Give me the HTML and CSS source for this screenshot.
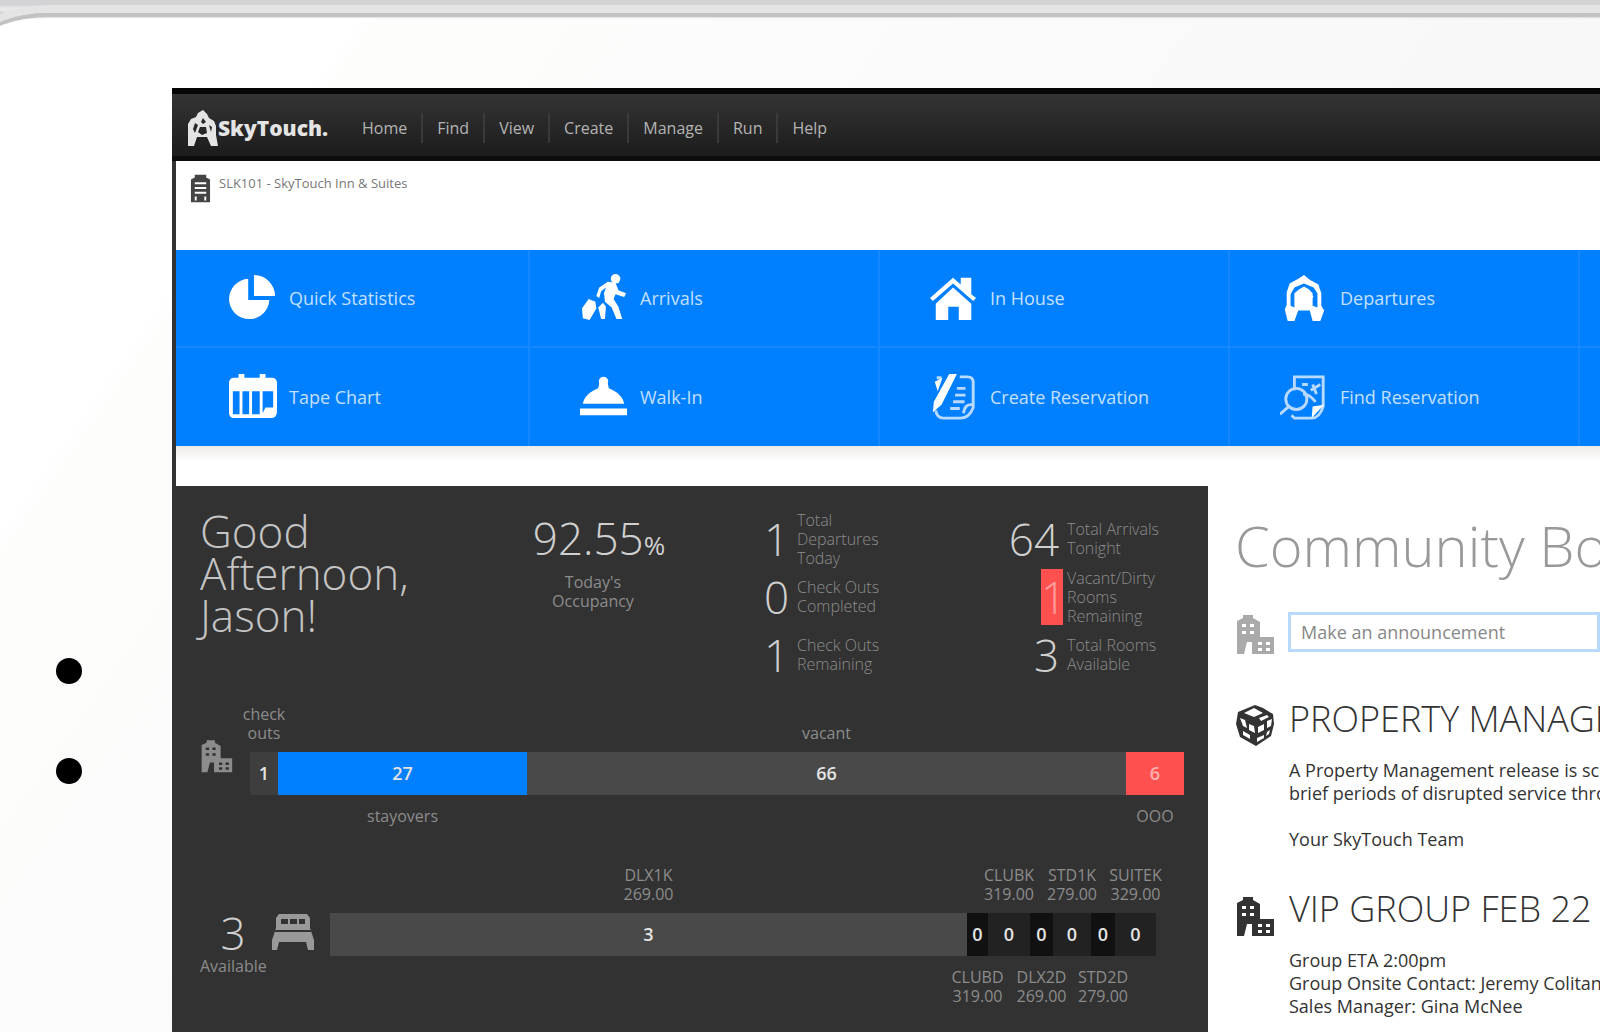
FILE: index.html
```html
<!DOCTYPE html>
<html lang="en">
<head>
<meta charset="utf-8">
<title>SkyTouch</title>
<link rel="stylesheet" href="styles.css">
</head>
<body>
<svg class="defs" aria-hidden="true">
  <symbol id="hotel" viewBox="0 0 40 42">
    <path fill-rule="evenodd" d="M2 42V9L8 6V3h10v3l7 4v15h14v17H17V30h-5l-3 12zM7 12v3h4v-3zm8 0v3h4v-3zm-8 7v3h4v-3zm8 0v3h4v-3zm8 11v3h4v-3zm8 0v3h4v-3zm-8 6v3h4v-3zm8 0v3h4v-3z"/>
  </symbol>
</svg>
<div class="device">
  <div class="bezel"></div>
  <div class="stage">
    <ul class="bullets"><li></li><li></li></ul>
    <div class="screen">
      <header class="topbar">
        <a class="logo" href="#">
          <svg class="logo-mark" viewBox="0 0 30 36" aria-hidden="true"><path fill-rule="evenodd" d="M0 36V14L3 9l5-2 2-4 5-3 4 4 2 4 5 3 2 5v9l2 11h-7l-4-9H9L6 36zM7 13l-2 6 2 4 3-8zm8-5-2 4 2 2 3-2zm6 7 2 7 1-5zm-9 2-2 5 4 3 5-2-1-6z"/></svg>
          <span>SkyTouch.</span>
        </a>
        <nav class="menu">
          <a href="#">Home</a><a href="#">Find</a><a href="#">View</a><a href="#">Create</a><a href="#">Manage</a><a href="#">Run</a><a href="#">Help</a>
        </nav>
      </header>
      <div class="property">
        <svg class="property-icon" viewBox="0 0 22 30" aria-hidden="true"><path fill-rule="evenodd" d="M1 30V6l4-2V1h12v3l4 2v24zM5 9v2h12V9zm0 5v2h12v-2zm0 5v2h12v-2zM5 28h2v-4H5zm10 0h2v-4h-2z"/></svg>
        <span>SLK101 - SkyTouch Inn &amp; Suites</span>
      </div>
      <nav class="tiles">
        <a href="#"><svg viewBox="0 0 50 50"><path d="M20 5v22h22A21 21 0 1 1 20 5z"/><path d="M26 1a22 22 0 0 1 22 22H26z"/></svg>Quick Statistics</a>
        <a href="#"><svg viewBox="0 0 50 50"><circle cx="37" cy="5" r="5"/><path d="M20 14l9-6 8 1 3 8 8 3-2 4-9-3-2 5 5 8 4 13h-6l-5-12-7-6-1-9 2-6-5 4-2 7-3-2zM2 36l7-10 7 3 1 7-7 12-7-2zM19 35l5-5 3 4-1 13h-4z"/></svg>Arrivals</a>
        <a href="#"><svg viewBox="0 0 50 50"><path d="M24 14L43 31v17H30V34H19v14H6V31z"/><path d="M24 4L0 25l3 3 21-18 21 18 3-3-5-4V4H32v7z"/></svg>In House</a>
        <a href="#"><svg viewBox="0 0 50 50"><path fill-rule="evenodd" d="M25 1l6 5 9 5 3 9v13l3 5-4 11h-8l-3-11H19l-4 11H8L5 37l2-5V19l3-9 9-5zm0 9l-10 4-4 7v12l4 2V20l5-4 5-3 5 3 4 4v13l5 2V20l-4-6z"/><path d="M25 17l4 5 6 1-3 5 1 6H17l1-6-3-5 6-1z"/></svg>Departures</a>
        <a href="#"></a>
        <a href="#"><svg viewBox="0 0 50 50"><path fill-rule="evenodd" d="M5 5h5V1h6v4h16V1h6v4h7a5 5 0 0 1 5 5v31a6 6 0 0 1-6 6H5a5 5 0 0 1-5-5V10a5 5 0 0 1 5-5zm-1 14v24h7V19zm10 0v24h7V19zm10 0v24h8V19zm11 0v23l3-6h8V19z"/></svg>Tape Chart</a>
        <a href="#"><svg viewBox="0 0 50 50"><path d="M20 11a5 5 0 1 1 9 0l1 5c8 3 15 9 16 16H3c1-7 8-13 16-16zM0 37h49v7H0z"/></svg>Walk-In</a>
        <a href="#"><svg class="outline" viewBox="0 0 50 50"><path d="M31 4h8q6 0 6 6v26q-4 11-13 11H14q-7 0-8-8M7 5h5M28 16h9M26 23h11M24 30h12M21 37h10M44 33q-8-1-9 9"/><path class="solid" d="M20 1h8L12 33 3 41l1-11zM5 9l8-4-5 14z"/></svg>Create Reservation</a>
        <a href="#"><svg class="outline" viewBox="0 0 50 50"><path d="M15 18V4h30v31q-4 12-12 12H15l-3-3M23 12h6M32 18l10-6M34 12l4 10"/><circle cx="17" cy="27" r="11"/><path d="M9 35l-9 8M24 22c6 0 10 4 13 8"/><path class="solid" d="M46 33L33 47l1-12z"/></svg>Find Reservation</a>
        <a href="#"></a>
      </nav>
      <main class="content">
        <section class="dashboard">
          <div class="summary">
            <h1>Good Afternoon, Jason!</h1>
            <div class="occupancy"><strong>92.55<small>%</small></strong><span>Today's<br>Occupancy</span></div>
            <dl class="stats">
              <dd>1</dd><dt>Total<br>Departures<br>Today</dt>
              <dd>0</dd><dt>Check Outs<br>Completed</dt>
              <dd>1</dd><dt>Check Outs<br>Remaining</dt>
            </dl>
            <dl class="stats">
              <dd>64</dd><dt>Total Arrivals<br>Tonight</dt>
              <dd><mark>1</mark></dd><dt>Vacant/Dirty<br>Rooms<br>Remaining</dt>
              <dd>3</dd><dt>Total Rooms<br>Available</dt>
            </dl>
          </div>
          <div class="chart-row">
            <div class="chart-key"><svg class="hotel" aria-hidden="true"><use href="#hotel"/></svg></div>
            <div class="chart rooms">
              <span class="above">check<br>outs</span><span class="above">&nbsp;</span><span class="above">vacant</span><span class="above">&nbsp;</span>
              <b class="dim">1</b><b class="blue">27</b><b class="grey">66</b><b class="red">6</b>
              <span></span><span>stayovers</span><span></span><span>OOO</span>
            </div>
          </div>
          <div class="chart-row types-row">
            <div class="chart-key available">
              <div class="count"><strong>3</strong><span>Available</span></div>
              <svg class="bed" viewBox="0 0 42 36" aria-hidden="true"><path fill-rule="evenodd" d="M4 14V4l3-4h28l3 4v10l4 12v10h-6l-2-8H7l-2 8H0V26zM9 5v5h7V5zm9 0v5h7V5zm9 0v5h6V5zM3 16v2h36v-2z"/></svg>
            </div>
            <div class="chart types">
              <span class="above">DLX1K<br>269.00</span><span class="above"></span><span class="above">CLUBK<br>319.00</span><span class="above"></span><span class="above">STD1K<br>279.00</span><span class="above"></span><span class="above">SUITEK<br>329.00</span>
              <b class="grey">3</b><b class="black">0</b><b class="dark">0</b><b class="black">0</b><b class="dark">0</b><b class="black">0</b><b class="dark">0</b>
              <span></span><span>CLUBD<br>319.00</span><span></span><span>DLX2D<br>269.00</span><span></span><span>STD2D<br>279.00</span><span></span>
            </div>
          </div>
        </section>
        <section class="community">
          <h2>Community Board</h2>
          <div class="entry announce">
            <svg class="entry-icon" aria-hidden="true"><use href="#hotel"/></svg>
            <input type="text" placeholder="Make an announcement" aria-label="Make an announcement">
          </div>
          <article class="entry">
            <svg class="entry-icon" viewBox="0 0 40 42" aria-hidden="true"><path fill-rule="evenodd" d="M20 1l8 3 10 6 1 10-3 12-15 10-16-9L1 20l2-12zM9 9l10-5 9 5-9 4zm-4 5l3 8 4 2-2-8zm9 6l5 2 1 7-6-3zm9 3l6-3v6l-6 3zm9-6l5-2-1 7-4 2zM8 27l7 4v4l-7-4zm14 7l7-3v3l-7 4zm10-6l3-2-1 4-3 2zM24 14l8-3 2 2-8 4z"/></svg>
            <div>
              <h3>PROPERTY MANAGEMENT</h3>
              <p>A Property Management release is scheduled with<br>brief periods of disrupted service throughout<br><br>Your SkyTouch Team</p>
            </div>
          </article>
          <article class="entry">
            <svg class="entry-icon" aria-hidden="true"><use href="#hotel"/></svg>
            <div>
              <h3>VIP GROUP FEB 22</h3>
              <p>Group ETA 2:00pm<br>Group Onsite Contact: Jeremy Colitan<br>Sales Manager: Gina McNee</p>
            </div>
          </article>
        </section>
      </main>
    </div>
  </div>
</div>
</body>
</html>
```
FILE: styles.css
```css
* { box-sizing: border-box; }

body {
  margin: 0;
  background: #d3d3d5;
  font-family: "Open Sans", "Noto Sans", sans-serif;
  overflow: hidden;
}

h1, h2, h3, p, dl, dd, ul { margin: 0; padding: 0; font-weight: 300; }
a { color: inherit; text-decoration: none; }
svg { display: block; flex: none; fill: currentColor; }
.defs { width: 0; height: 0; position: absolute; }

.device {
  min-height: 100vh;
  background: linear-gradient(125deg, #fff 0, #fff 16%, #fdfdfc 17%, #fafafa 50%, #f4f4f4 100%);
}

.bezel {
  height: 30px;
  background: linear-gradient(#d3d3d5 0, #d3d3d5 5px, #e8e8e9 8px, #e8e8e9 11px, #bcbcbe 14px, #c4c4c6 15px, transparent 19px);
  overflow: hidden;
}
.bezel::after {
  content: "";
  display: block;
  height: 60px;
  margin: 13px 0 0 -20px;
  border: solid #c2c2c4;
  border-width: 4px 0 0 4px;
  border-top-left-radius: 70px 30px;
  box-shadow: 0 0 0 8px #e4e4e5;
}

.stage { display: grid; grid-template-columns: 172px minmax(0, 1fr); padding-top: 58px; }

.bullets { list-style: none; padding: 570px 0 0 56px; }
.bullets li { width: 26px; height: 26px; margin-bottom: 74px; border-radius: 50%; background: #000; }

.screen { min-height: calc(100vh - 88px); border-left: 4px solid #333; background: #fff; }

.topbar {
  display: flex;
  align-items: center;
  height: 73px;
  margin-left: -4px;
  padding: 5px 0 0 16px;
  border-top: 6px solid #060606;
  border-bottom: 5px solid #0c0c0c;
  background: linear-gradient(#343434, #1c1c1c);
}
.logo { display: flex; align-items: center; width: 160px; color: #e4e4e4; font-size: 21px; font-weight: 800; }
.logo-mark { width: 30px; height: 36px; }
.menu { display: flex; color: #b4b4b4; font-size: 16px; line-height: 30px; }
.menu a { padding: 0 14px; border-left: 2px solid #3a3a3a; }
.menu a:first-child { border-left: 0; }

.property { display: flex; gap: 8px; height: 89px; padding: 12px 14px 0; color: #777; font-size: 13px; line-height: 20px; }
.property-icon { width: 21px; height: 30px; color: #444; }

.tiles {
  display: grid;
  grid-template-columns: 354fr 350fr 350fr 350fr 20fr;
  grid-auto-rows: 98px;
  background: #007fff;
  color: #c4e0ff;
  font-size: 18px;
}
.tiles a {
  display: flex;
  align-items: center;
  gap: 12px;
  padding-left: 50px;
  border-right: 2px solid #1587ff;
  border-bottom: 2px solid #1587ff;
  overflow: hidden;
  white-space: nowrap;
}
.tiles a:nth-child(5n + 1) { padding-left: 53px; }
.tiles a:nth-child(5n) { border-right: 0; padding: 0; }
.tiles a:nth-child(n + 6) { border-bottom: 0; }
.tiles svg { width: 48px; height: 48px; color: #fff; }
.outline { fill: none; stroke: #b8daff; stroke-width: 3; }
.outline .solid { fill: #fff; stroke: none; }

.content {
  display: grid;
  grid-template-columns: 1032fr 392fr;
  padding-top: 40px;
  background: linear-gradient(#eeecea 0, #fff 16px);
}

.dashboard { min-height: 546px; padding: 24px 24px 0; background: #323232; color: #8c8c8c; font-size: 16px; line-height: 19px; }
.summary { display: grid; grid-template-columns: 318fr 217fr 270fr 179fr; }
.summary h1 { width: 220px; color: #c4c4c4; font-size: 44px; line-height: 42px; }
.dashboard strong { display: block; color: #d0d0d0; font-size: 44px; font-weight: 300; line-height: 48px; }
.occupancy { width: 150px; padding-top: 4px; text-align: center; }
.occupancy strong { padding-bottom: 4px; margin-right: -12px; }
.occupancy small { font-size: 26px; font-weight: 400; }
.occupancy span { display: block; }
.stats { display: grid; grid-template-columns: 54px 100px; grid-auto-rows: 58px; column-gap: 8px; align-items: center; white-space: nowrap; }
.stats dd { color: #d0d0d0; font-size: 44px; line-height: 56px; text-align: right; }
.stats mark { display: inline-block; width: 22px; margin-right: -4px; background: #ff5050; color: #ff9c9c; text-align: center; }

.chart-row { display: grid; grid-template-columns: 50fr 934fr; padding-top: 18px; }
.types-row { grid-template-columns: 130fr 826fr 28fr; }
.chart-key { padding-top: 35px; }
.available { display: flex; gap: 6px; padding-top: 46px; }
.count { width: 66px; text-align: center; }
.hotel { width: 33px; height: 36px; }
.bed { width: 42px; height: 36px; margin-top: 5px; color: #999; }
.chart { display: grid; grid-template-rows: 50px 43px 50px; text-align: center; white-space: nowrap; }
.chart span { justify-self: center; padding-top: 12px; }
.chart .above { align-self: end; padding: 0 0 9px; }
.chart b { color: #e4e4e4; font-size: 18px; font-weight: 600; line-height: 43px; }
.rooms { grid-template-columns: minmax(0, 28fr) minmax(0, 249fr) minmax(0, 599fr) minmax(0, 58fr); }
.types {
  grid-template-columns: minmax(0, 637fr) minmax(0, 21fr) minmax(0, 42fr) minmax(0, 23fr) minmax(0, 38fr) minmax(0, 24fr) minmax(0, 41fr);
}
.chart .dim { background: #3e3e3e; }
.chart .blue { background: #007fff; }
.chart .grey { background: #494949; }
.chart .red { background: #ff5050; color: #ffb0b0; }
.chart .black { background: #111; }
.chart .dark { background: #222; }

.community { padding: 22px 0 0 27px; overflow: hidden; white-space: nowrap; color: #333; }
.community h2 { color: #999; font-size: 56px; line-height: 74px; }
.entry { display: flex; gap: 14px; padding-top: 34px; }
.entry-icon { width: 40px; height: 42px; margin-top: 9px; color: #333; }
.announce { gap: 13px; padding: 30px 0 7px; }
.announce .entry-icon { margin: 0; color: #aaa; }
.announce input {
  width: 400px;
  height: 40px;
  padding: 0 10px;
  border: 3px solid #b9dafb;
  background: #fff;
  color: #777;
  font: 18px "Open Sans", sans-serif;
}
.announce input::placeholder { color: #888; opacity: 1; }
.entry h3 { font-size: 36px; line-height: 48px; color: #333; }
.entry p { padding-top: 16px; font-size: 18px; line-height: 23px; font-weight: 400; }
```
